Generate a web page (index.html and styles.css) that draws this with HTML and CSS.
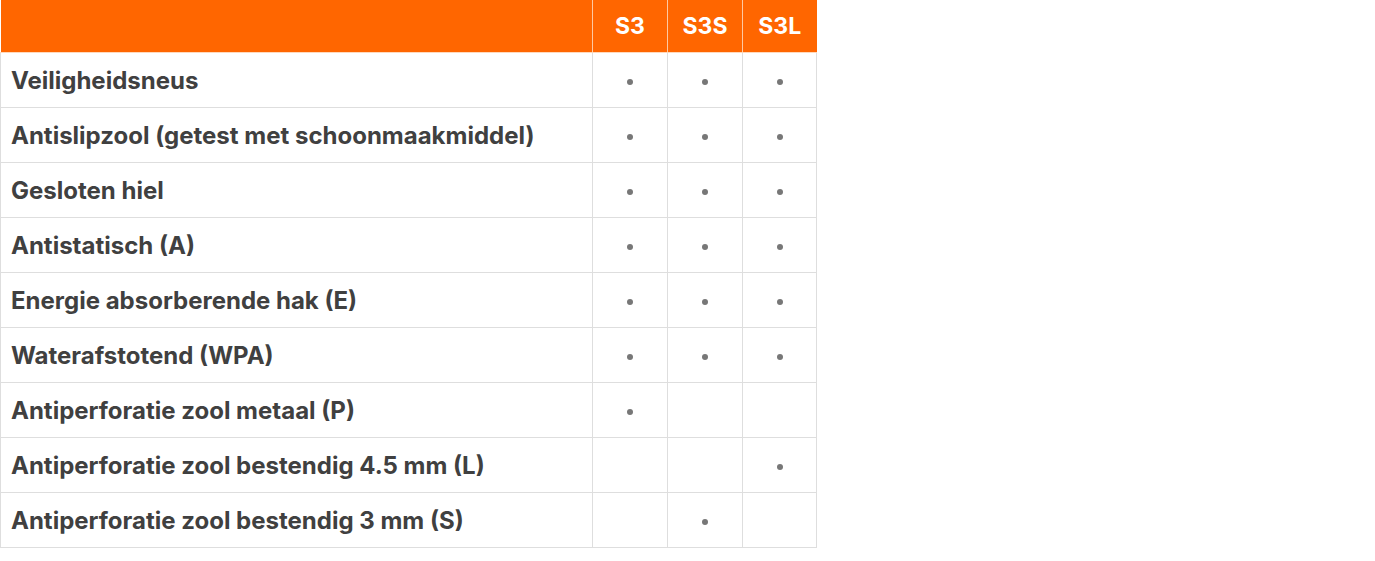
FILE: index.html
```html
<!DOCTYPE html>
<html lang="nl">
<head>
<meta charset="utf-8">
<title>Veiligheidsklassen</title>
<link rel="stylesheet" href="styles.css">
</head>
<body>
<table class="spec">
  <colgroup>
    <col class="c-label">
    <col class="c-val">
    <col class="c-val">
    <col class="c-last">
  </colgroup>
  <thead>
    <tr>
      <th class="blank"></th>
      <th>S3</th>
      <th>S3S</th>
      <th>S3L</th>
    </tr>
  </thead>
  <tbody>
    <tr><td class="label">Veiligheidsneus</td><td><span class="dot"></span></td><td><span class="dot"></span></td><td><span class="dot"></span></td></tr>
    <tr><td class="label">Antislipzool (getest met schoonmaakmiddel)</td><td><span class="dot"></span></td><td><span class="dot"></span></td><td><span class="dot"></span></td></tr>
    <tr><td class="label">Gesloten hiel</td><td><span class="dot"></span></td><td><span class="dot"></span></td><td><span class="dot"></span></td></tr>
    <tr><td class="label">Antistatisch (A)</td><td><span class="dot"></span></td><td><span class="dot"></span></td><td><span class="dot"></span></td></tr>
    <tr><td class="label">Energie absorberende hak (E)</td><td><span class="dot"></span></td><td><span class="dot"></span></td><td><span class="dot"></span></td></tr>
    <tr><td class="label">Waterafstotend (WPA)</td><td><span class="dot"></span></td><td><span class="dot"></span></td><td><span class="dot"></span></td></tr>
    <tr><td class="label">Antiperforatie zool metaal (P)</td><td><span class="dot"></span></td><td></td><td></td></tr>
    <tr><td class="label">Antiperforatie zool bestendig 4.5 mm (L)</td><td></td><td></td><td><span class="dot"></span></td></tr>
    <tr><td class="label">Antiperforatie zool bestendig 3 mm (S)</td><td></td><td><span class="dot"></span></td><td></td></tr>
  </tbody>
</table>
</body>
</html>
```

FILE: styles.css
```css
html, body {
  margin: 0;
  padding: 0;
  background: #ffffff;
}

body {
  font-family: Inter, "Noto Sans", "Liberation Sans", sans-serif;
}

.spec {
  border-collapse: collapse;
  table-layout: fixed;
  width: 816px;
}

.c-label { width: 592px; }
.c-val { width: 75px; }
.c-last { width: 74px; }

.spec th {
  background: #ff6600;
  color: #ffffff;
  font-size: 23px;
  font-weight: 700;
  height: 52px;
  padding: 0;
  text-align: center;
  border-left: 1px solid #ffc8a0;
  border-bottom: 1px solid #ffd9bd;
}

.spec th.blank {
  border-left: none;
}

.spec td {
  height: 54px;
  padding: 0;
  border: 1px solid #dedede;
  text-align: center;
  vertical-align: middle;
}

.spec td.label {
  text-align: left;
  padding-left: 10px;
  font-size: 24px;
  font-weight: 700;
  color: #404040;
}

.dot {
  display: inline-block;
  width: 6px;
  height: 6px;
  border-radius: 50%;
  background: #777777;
  vertical-align: middle;
}
```
